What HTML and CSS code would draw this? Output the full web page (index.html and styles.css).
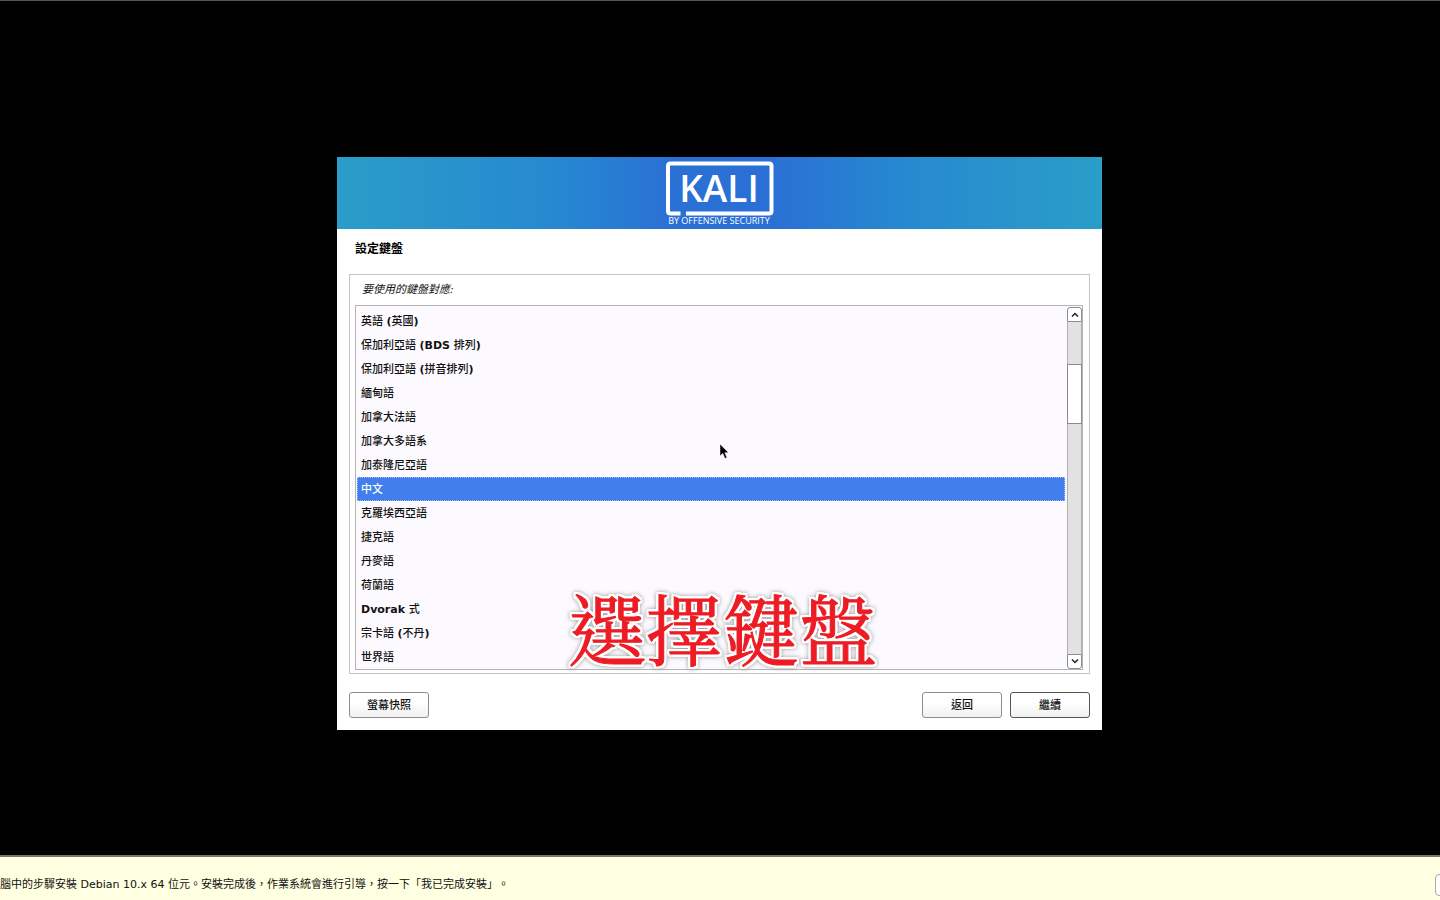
FILE: index.html
```html
<!DOCTYPE html>
<html lang="zh-Hant">
<head>
<meta charset="utf-8">
<meta name="viewport" content="width=device-width, initial-scale=1">
<title>設定鍵盤</title>
<link rel="stylesheet" href="styles.css">
</head>
<body>
<main class="stage">
  <section class="installer">
    <header class="banner">
      <svg class="logo" width="110" height="68" viewBox="0 0 110 68" role="img" aria-label="KALI">
        <path d="M15.500 54.500H5.500Q3 54.500 3 52V7Q3 4.500 5.500 4.500H104Q106.500 4.500 106.500 7V52Q106.500 54.500 104 54.500H21" fill="none" stroke="#fff" stroke-width="4"/>
        <text class="logo-name" x="54" y="43" text-anchor="middle">KALI</text>
        <text class="logo-tag" x="54" y="65" text-anchor="middle">BY OFFENSIVE SECURITY</text>
      </svg>
    </header>
    <h1 class="title">設定鍵盤</h1>
    <div class="panel">
      <p class="prompt" id="prompt">要使用的鍵盤對應:</p>
      <div class="listbox">
        <ul class="options" role="listbox" aria-labelledby="prompt" tabindex="0">
          <li class="option" role="option">英語 <b>(</b>英國<b>)</b></li>
          <li class="option" role="option">保加利亞語 <b>(BDS </b>排列<b>)</b></li>
          <li class="option" role="option">保加利亞語 <b>(</b>拼音排列<b>)</b></li>
          <li class="option" role="option">緬甸語</li>
          <li class="option" role="option">加拿大法語</li>
          <li class="option" role="option">加拿大多語系</li>
          <li class="option" role="option">加泰隆尼亞語</li>
          <li class="option selected" role="option" aria-selected="true">中文</li>
          <li class="option" role="option">克羅埃西亞語</li>
          <li class="option" role="option">捷克語</li>
          <li class="option" role="option">丹麥語</li>
          <li class="option" role="option">荷蘭語</li>
          <li class="option" role="option"><b>Dvorak </b>式</li>
          <li class="option" role="option">宗卡語 <b>(</b>不丹<b>)</b></li>
          <li class="option" role="option">世界語</li>
        </ul>
        <div class="scrollbar">
          <button class="arrow arrow-up" type="button" aria-label="向上捲動"><svg width="8" height="5" viewBox="0 0 8 5"><path d="M1 4.500L4 1.500L7 4.500" fill="none" stroke="#222" stroke-width="1.500"/></svg></button>
          <div class="track"><div class="thumb"></div></div>
          <button class="arrow arrow-down" type="button" aria-label="向下捲動"><svg width="8" height="5" viewBox="0 0 8 5"><path d="M1 .5L4 3.500L7 .5" fill="none" stroke="#222" stroke-width="1.500"/></svg></button>
        </div>
      </div>
    </div>
    <div class="actions">
      <button class="btn" type="button">螢幕快照</button>
      <button class="btn push" type="button">返回</button>
      <button class="btn default" type="button">繼續</button>
    </div>
    <p class="caption">選擇鍵盤</p>
    <svg class="pointer" width="11" height="16" viewBox="0 0 11 16" aria-hidden="true"><path d="M0 0V12L2.800 9.400L5 14.500L7 13.600L4.800 8.700H8.500Z" fill="#000" stroke="#fff" stroke-width=".5"/></svg>
  </section>
</main>
<footer class="hint">
  <p class="hint-text">腦中的步驟安裝 Debian 10.x 64 位元。安裝完成後，作業系統會進行引導，按一下「我已完成安裝」。</p>
  <button class="hint-btn" type="button" aria-label="說明"></button>
</footer>
</body>
</html>
```
FILE: styles.css
```css
* { box-sizing: border-box; }

body {
  margin: 0;
  min-height: 100vh;
  display: flex;
  flex-direction: column;
  background: #000;
  color: #111;
  font: 11px/16px "DejaVu Sans", "Noto Sans CJK TC", sans-serif;
}

h1, p, ul { margin: 0; padding: 0; }

button { font: inherit; color: inherit; padding: 0; }

.stage {
  flex: 1;
  display: flex;
  align-items: center;
  justify-content: center;
  padding: 31px 1px 0 0;
  border-top: 1px solid #555;
}

.installer {
  position: relative;
  width: 100%;
  max-width: 765px;
  background: #fff;
}

.banner {
  display: flex;
  justify-content: center;
  height: 72px;
  padding-top: 2px;
  background: linear-gradient(90deg, #2a9dc8 0%, #2689d0 28%, #2a70d5 44%, #2a6fd5 56%, #2689d0 74%, #2a9dc8 100%);
}

.logo { display: block; }

.logo-name {
  font: 600 37px "Open Sans", sans-serif;
  fill: #fff;
}

.logo-tag {
  font: 9px "Open Sans", sans-serif;
  fill: #fff;
}

.title {
  padding: 12px 18px 17px;
  font-size: 12px;
  line-height: 16px;
  font-weight: 700;
  color: #000;
}

.panel {
  margin: 0 12px;
  padding: 0 6px 3px 5px;
  border: 1px solid #c4c4c4;
}

.prompt {
  padding: 7px;
  font-style: italic;
}

.listbox {
  display: flex;
  border: 1px solid #b4b4b4;
  background: #fcfaff;
}

.options {
  flex: 1;
  padding: 3px 2px 0 1px;
  list-style: none;
  outline: none;
}

.option {
  height: 24px;
  padding: 0 4px;
  line-height: 26px;
  font-weight: 500;
  color: #111;
}

.selected {
  background: #427fed;
  color: #fff;
  outline: 1px dotted #9dbcf7;
  outline-offset: -1px;
}

.scrollbar {
  display: flex;
  flex-direction: column;
  width: 15px;
  padding-top: 1px;
}

.arrow {
  display: flex;
  align-items: center;
  justify-content: center;
  height: 15px;
  border: 1px solid #8c8c8c;
  background: #fff;
}

.arrow-up { border-radius: 3px 3px 0 0; }
.arrow-down { border-radius: 0 0 3px 3px; }

.track {
  flex: 1;
  padding-top: 42px;
  border: 1px solid #b0b0b0;
  border-width: 0 1px;
  background: #e2e2e2;
}

.thumb {
  height: 60px;
  margin: 0 -1px;
  border: 1px solid #8c8c8c;
  background: #fff;
}

.actions {
  display: flex;
  gap: 8px;
  padding: 18px 12px 12px;
}

.btn {
  width: 80px;
  height: 26px;
  padding-top: 2px;
  border: 1px solid #8e8e8e;
  border-radius: 3px;
  background: linear-gradient(#fff 40%, #f0f0f0);
  font-weight: 500;
}

.push { margin-left: auto; }
.default { border-color: #555; }

.caption {
  position: absolute;
  left: 0;
  right: 0;
  bottom: 58px;
  padding-left: 6px;
  text-align: center;
  font: 400 77px/90px "Noto Serif CJK TC", "Noto Sans CJK TC", sans-serif;
  color: #ed1c24;
  -webkit-text-stroke: 1px #ed1c24;
  filter:
    drop-shadow(2px 0 0 #fff) drop-shadow(-2px 0 0 #fff)
    drop-shadow(0 2px 0 #fff) drop-shadow(0 -2px 0 #fff)
    drop-shadow(0 0 2px #999);
  pointer-events: none;
}

.pointer {
  position: absolute;
  left: 50%;
  top: 50%;
}

.hint {
  display: flex;
  align-items: center;
  justify-content: space-between;
  height: 45px;
  overflow: hidden;
  padding-top: 13px;
  border-top: 2px solid #77776a;
  background: #ffffe1;
}

.hint-text {
  white-space: nowrap;
  text-spacing-trim: space-all;
}

.hint-btn {
  flex: none;
  width: 80px;
  height: 22px;
  margin-right: -75px;
  border: 1px solid #aaa;
  border-radius: 4px;
  background: #fff;
}
```
